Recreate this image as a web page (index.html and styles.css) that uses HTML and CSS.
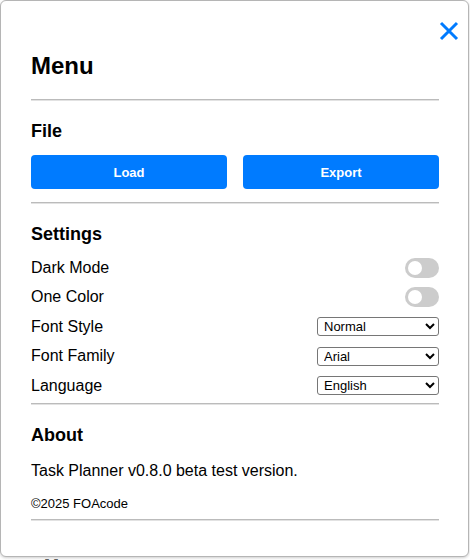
FILE: index.html
```html
<!DOCTYPE html>
<html lang="en">
<head>
    <meta charset="UTF-8">
    <meta name="viewport" content="width=device-width, initial-scale=1.0">
    <title>Task Planner - Menu</title>
    <link rel="stylesheet" href="styles.css">
</head>
<body>
    <div class="page-behind">Menu</div>
    <div class="menu-panel">
        <button class="close-btn" aria-label="Close">
            <svg width="20" height="20" viewBox="0 0 20 20">
                <path d="M2 2 L18 18 M18 2 L2 18" stroke="#007bff" stroke-width="3" fill="none"/>
            </svg>
        </button>
        <h1 class="menu-title">Menu</h1>
        <hr>
        <div class="menu-section file-section">
            <h2>File</h2>
            <div class="file-buttons">
                <button id="loadBtn">Load</button>
                <button id="exportBtn">Export</button>
            </div>
        </div>
        <hr>
        <div class="menu-section settings-section">
            <h2>Settings</h2>
            <div class="setting-row">
                <span>Dark Mode</span>
                <label class="switch"><input type="checkbox" id="darkMode"><span class="slider"></span></label>
            </div>
            <div class="setting-row">
                <span>One Color</span>
                <label class="switch"><input type="checkbox" id="oneColor"><span class="slider"></span></label>
            </div>
            <div class="setting-row">
                <span>Font Style</span>
                <select id="fontStyle">
                    <option>Normal</option>
                    <option>Bold</option>
                    <option>Italic</option>
                </select>
            </div>
            <div class="setting-row">
                <span>Font Family</span>
                <select id="fontFamily">
                    <option>Arial</option>
                    <option>Verdana</option>
                    <option>Georgia</option>
                </select>
            </div>
            <div class="setting-row">
                <span>Language</span>
                <select id="language">
                    <option>English</option>
                    <option>Deutsch</option>
                </select>
            </div>
        </div>
        <hr>
        <div class="menu-section about-section">
            <h2>About</h2>
            <p class="about-text">Task Planner v0.8.0 beta test version.</p>
            <p class="copyright">&copy;2025 FOAcode</p>
        </div>
        <hr>
    </div>
</body>
</html>
```

FILE: styles.css
```css
body {
    font-family: 'Liberation Sans', Arial, sans-serif;
    margin: 0;
    padding: 0;
    background-color: #fff;
    height: 560px;
    overflow: hidden;
}
.page-behind {
    position: absolute;
    top: 556px;
    left: 44px;
    font-size: 18px;
    font-weight: bold;
    color: #666;
}
.menu-panel {
    position: relative;
    box-sizing: border-box;
    width: 469px;
    height: 557px;
    padding: 40px 29px 0 30px;
    background: white;
    border: 1px solid #b5b5b5;
    border-radius: 6px;
    box-shadow: 0 1px 3px rgba(0, 0, 0, 0.2);
}
.close-btn {
    position: absolute;
    top: 20px;
    right: 9px;
    width: 20px;
    height: 20px;
    padding: 0;
    border: none;
    background: none;
    cursor: pointer;
}
.close-btn svg {
    display: block;
}
.menu-title {
    font-size: 24px;
    margin: 11px 0 19px 0;
}
hr {
    margin: 0;
    border: none;
    border-top: 1px solid #bbb;
    border-bottom: 1px solid #e2e2e2;
}
.menu-section h2 {
    font-size: 18px;
    margin: 20px 0 13px 0;
}
.file-buttons {
    display: flex;
    gap: 16px;
    margin-bottom: 13px;
}
.file-buttons button {
    flex: 1;
    height: 34px;
    background-color: #007bff;
    color: white;
    border: none;
    border-radius: 4px;
    font-family: 'Liberation Sans', Arial, sans-serif;
    font-size: 13px;
    font-weight: bold;
    cursor: pointer;
}
.settings-section h2 {
    margin-bottom: 8px;
}
.setting-row {
    display: flex;
    justify-content: space-between;
    align-items: center;
    height: 29.5px;
    font-size: 16px;
}
.setting-row:last-child {
    margin-bottom: 2px;
}
.switch {
    position: relative;
    display: inline-block;
    width: 34px;
    height: 20px;
}
.switch input {
    opacity: 0;
    width: 0;
    height: 0;
}
.slider {
    position: absolute;
    inset: 0;
    background-color: #ccc;
    border-radius: 20px;
    cursor: pointer;
}
.slider::before {
    content: "";
    position: absolute;
    left: 3px;
    top: 3px;
    width: 14px;
    height: 14px;
    background: white;
    border-radius: 50%;
}
select {
    width: 122px;
    height: 19px;
    font-family: 'Liberation Sans', Arial, sans-serif;
    font-size: 13px;
    padding: 0 2px;
    border: 1px solid #767676;
    border-radius: 3px;
    background: white;
    color: black;
}
.about-section h2 {
    margin-bottom: 16px;
}
.about-text {
    font-size: 16px;
    margin: 0 0 16px 0;
}
.copyright {
    font-size: 13px;
    margin: 0 0 8px 0;
}
```
